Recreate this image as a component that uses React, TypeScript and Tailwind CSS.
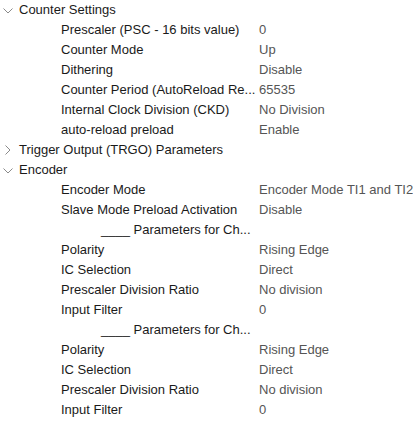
import React from "react";

type Row =
  | { kind: "group"; label: string; open: boolean }
  | { kind: "prop"; label: string; value: string; indent?: boolean };

const rows: Row[] = [
  { kind: "group", label: "Counter Settings", open: true },
  { kind: "prop", label: "Prescaler (PSC - 16 bits value)", value: "0" },
  { kind: "prop", label: "Counter Mode", value: "Up" },
  { kind: "prop", label: "Dithering", value: "Disable" },
  { kind: "prop", label: "Counter Period (AutoReload Re...", value: "65535" },
  { kind: "prop", label: "Internal Clock Division (CKD)", value: "No Division" },
  { kind: "prop", label: "auto-reload preload", value: "Enable" },
  { kind: "group", label: "Trigger Output (TRGO) Parameters", open: false },
  { kind: "group", label: "Encoder", open: true },
  { kind: "prop", label: "Encoder Mode", value: "Encoder Mode TI1 and TI2" },
  { kind: "prop", label: "Slave Mode Preload Activation", value: "Disable" },
  { kind: "prop", label: "____ Parameters for Ch...", value: "", indent: true },
  { kind: "prop", label: "Polarity", value: "Rising Edge" },
  { kind: "prop", label: "IC Selection", value: "Direct" },
  { kind: "prop", label: "Prescaler Division Ratio", value: "No division" },
  { kind: "prop", label: "Input Filter", value: "0" },
  { kind: "prop", label: "____ Parameters for Ch...", value: "", indent: true },
  { kind: "prop", label: "Polarity", value: "Rising Edge" },
  { kind: "prop", label: "IC Selection", value: "Direct" },
  { kind: "prop", label: "Prescaler Division Ratio", value: "No division" },
  { kind: "prop", label: "Input Filter", value: "0" },
];

function Chevron({ open }: { open: boolean }) {
  return (
    <svg width="19" height="20" viewBox="0 0 19 20" className="shrink-0">
      {open ? (
        <path d="M3.5 8.5 L8 13 L12.5 8.5" fill="none" stroke="#8a8a8a" strokeWidth="1" />
      ) : (
        <path d="M5.5 5.5 L10 10 L5.5 14.5" fill="none" stroke="#8a8a8a" strokeWidth="1" />
      )}
    </svg>
  );
}

export default function App() {
  return (
    <div
      className="w-[413px] h-[424px] bg-white overflow-hidden text-[13px]"
      style={{ fontFamily: '"Liberation Sans", Arial, sans-serif' }}
    >
      {rows.map((r, i) =>
        r.kind === "group" ? (
          <div key={i} className="flex items-center h-[20px] text-[#1a1a1a]">
            <Chevron open={r.open} />
            <span className="whitespace-nowrap">{r.label}</span>
          </div>
        ) : (
          <div key={i} className="flex items-center h-[20px]">
            <div className="w-[61px] shrink-0" />
            <div
              className={
                "w-[198px] shrink-0 whitespace-nowrap overflow-hidden text-[#1a1a1a] " +
                (r.indent ? "pl-[40px]" : "")
              }
            >
              {r.label}
            </div>
            <div className="whitespace-nowrap text-[#555555]">{r.value}</div>
          </div>
        )
      )}
    </div>
  );
}
